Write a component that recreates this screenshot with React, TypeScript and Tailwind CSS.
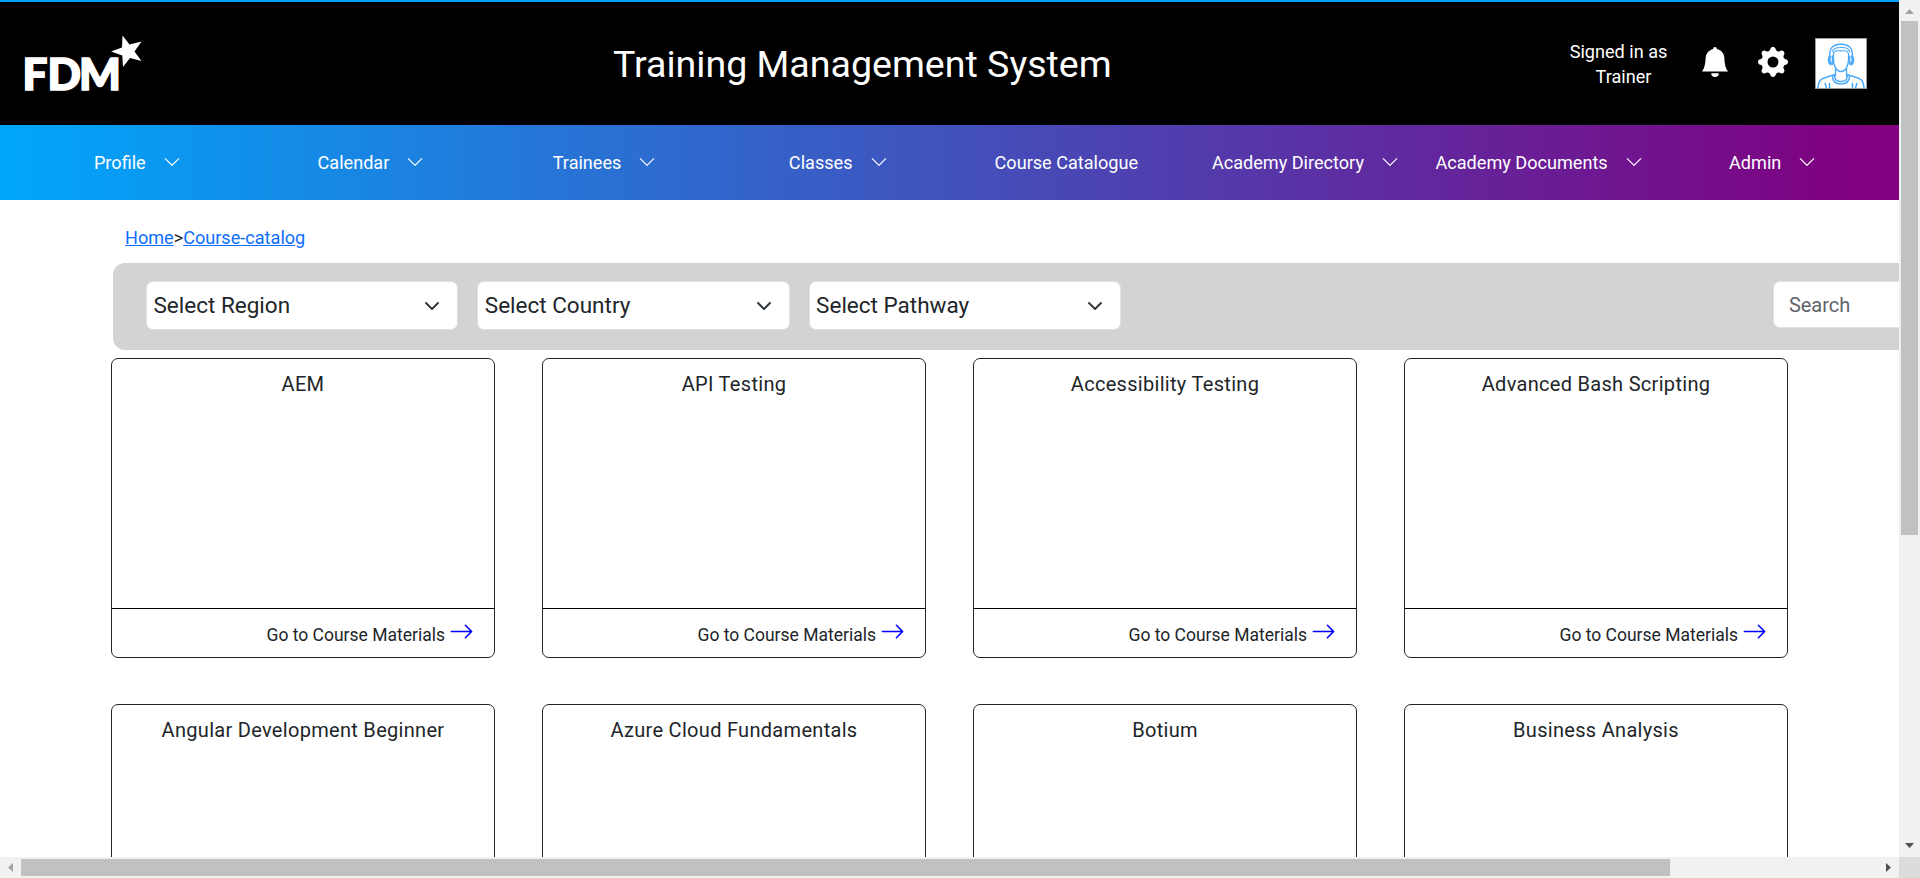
import { BsArrowRight, BsBellFill, BsChevronDown, BsGearFill } from "react-icons/bs";

const navItems = [
  { label: "Profile", menu: true },
  { label: "Calendar", menu: true },
  { label: "Trainees", menu: true },
  { label: "Classes", menu: true },
  { label: "Course Catalogue", menu: false },
  { label: "Academy Directory", menu: true },
  { label: "Academy Documents", menu: true },
  { label: "Admin", menu: true },
];

const filters = ["Select Region", "Select Country", "Select Pathway"];

const courses = [
  "AEM",
  "API Testing",
  "Accessibility Testing",
  "Advanced Bash Scripting",
  "Angular Development Beginner",
  "Azure Cloud Fundamentals",
  "Botium",
  "Business Analysis",
];

function Logo() {
  return (
    <svg width="140" height="80" viewBox="15 27 140 80" className="shrink-0">
      <text
        y="90.2"
        x="22.6 47.6 79"
        fill="#fff"
        stroke="#fff"
        strokeWidth="1.7"
        fontFamily="Lato, sans-serif"
        fontWeight="900"
        fontSize="44"
      >
        FDM
      </text>
      <path fill="#fff" d="M122.500 35.500 L129.500 44.500 L141.500 41.500 L134.500 51.500 L141.500 61 L130 58 L123 67 L122.300 55.500 L111 51.500 L122 47.500 Z" />
    </svg>
  );
}

function Avatar() {
  return (
    <svg width="52" height="51" viewBox="0 0 52 51" fill="none" stroke="#4aa8f8" className="shrink-0">
      <rect x="0.5" y="0.5" width="51" height="50" fill="#fff" stroke="#9a9a9a" />
      <path strokeWidth="1.4" d="M15 20C13.500 10 18 6.200 26 6.200S38.500 10 37 20" />
      <path strokeWidth="1.2" d="M18.500 20V15.500C20 12 22 12.800 26 12.800S32 12 33.500 15.500V20" />
      <path strokeWidth="1.2" d="M17 14C19 9.500 22 9.500 26 9.500S33 9.500 35 14" />
      <path strokeWidth="1.4" d="M18.300 18C18 27 21 33.500 26 33.500S34 27 33.700 18" />
      <path strokeWidth="2.800" d="M15.500 18C13.200 20 13.500 24.500 16.500 26.500M36.500 18C38.800 20 38.500 24.500 35.500 26.500" />
      <path strokeWidth="1.300" d="M17.300 17.500V27M34.700 17.500V27M20.500 30.500V38M31.500 30.500V38" />
      <path strokeWidth="1.500" d="M3 50C3.500 42 6.500 40.500 12 39L20 36.500C19 42 22 43.500 26 43.500S33 42 32 36.500L40 39C45.500 40.500 48.500 42 49 50" />
      <path strokeWidth="1.4" d="M17.500 38C17.500 44 21 46 26 46S34.500 44 34.500 38" />
      <path strokeWidth="1.5" d="M10 45L11.500 50M14.500 45V50M42 45L40.500 50M37.500 45V50" />
    </svg>
  );
}

function Header() {
  return (
    <header className="flex h-[125px] shrink-0 border-t-2 border-[#009fff] bg-black text-white">
      <div className="w-[613px] shrink-0 pt-[25px] pl-[15px]">
        <Logo />
      </div>
      <h1 className="w-[956px] shrink-0 pt-[34px] text-[37.55px] leading-[56px] whitespace-nowrap">
        Training Management System
      </h1>
      <div className="w-[99px] shrink-0 pt-[37px] text-center text-[18.1px] leading-[25px] whitespace-nowrap">
        <div>Signed in as</div>
        <div className="pl-[10px]">Trainer</div>
      </div>
      <div className="flex items-start pt-[45px] pl-[32px]">
        <BsBellFill size={30} />
        <BsGearFill size={30} className="ml-[28px]" />
        <div className="-mt-[9px] ml-[27px]">
          <Avatar />
        </div>
      </div>
    </header>
  );
}

function Nav() {
  return (
    <nav className="grid h-[75px] shrink-0 grid-cols-8 bg-[linear-gradient(to_right,#00a6fb,#800080_98%)] pr-[9.5px] pl-[20.5px] text-[18.1px] text-white">
      {navItems.map((item) => (
        <a key={item.label} className="flex items-center justify-center pb-px whitespace-nowrap">
          <span className="pt-[2px]">{item.label}</span>
          {item.menu ? <BsChevronDown size={18} className="ml-[17px]" /> : <span className="w-[11px]" />}
        </a>
      ))}
    </nav>
  );
}

function FilterBar() {
  return (
    <div className="ml-[113px] flex h-[87px] w-[2000px] shrink-0 items-start rounded-[12px] bg-[#d3d3d3] pt-[18px] pl-[33px]">
      <div className="flex gap-[19px]">
        {filters.map((label) => (
          <button
            key={label}
            className="flex h-[49px] w-[312.3px] items-center justify-between rounded-[7px] border border-[#dee2e6] bg-white pr-[17px] pl-[6.5px] text-[22.5px]"
          >
            {label}
            <svg width="16" height="16" viewBox="0 0 16 16" fill="none" stroke="#343a40" strokeWidth="2" strokeLinecap="round" strokeLinejoin="round">
              <path d="m2 5 6 6 6-6" />
            </svg>
          </button>
        ))}
      </div>
      <input
        placeholder="Search"
        className="ml-[652px] h-[47px] w-[280px] rounded-[7px] border border-[#dee2e6] bg-white px-[15px] text-[20px] placeholder:text-[#5f6469]"
      />
    </div>
  );
}

function CourseCard({ title }: { title: string }) {
  return (
    <article className="flex h-[300px] flex-col rounded-[7px] border border-[#212529]">
      <h2 className="flex-1 pt-[10px] text-center text-[20px] leading-[30px] tracking-[0.3px]">{title}</h2>
      <div className="flex h-[49px] justify-end border-t border-black pt-[13px] pr-[20px] text-[17.5px] leading-[27px]">
        <span>Go to Course Materials</span>
        <BsArrowRight size={25} color="#0000ff" className="-mt-[3px] ml-[4px]" />
      </div>
    </article>
  );
}

function VerticalScrollbar() {
  return (
    <div className="flex w-[21px] shrink-0 flex-col items-center bg-[#f1f1f1]">
      <svg width="21" height="21" className="shrink-0">
        <path fill="#a3a3a3" d="M10.500 9 15 14H6Z" />
      </svg>
      <div className="h-[514px] w-[17px] bg-[#c1c1c1]" />
      <svg width="21" height="21" className="mt-auto shrink-0">
        <path fill="#505050" d="M6 7H15L10.500 12Z" />
      </svg>
    </div>
  );
}

function HorizontalScrollbar() {
  return (
    <div className="flex h-[21px] shrink-0 items-center bg-[#f1f1f1]">
      <svg width="21" height="21" className="shrink-0">
        <path fill="#a3a3a3" d="M8 10.500 13 6V15Z" />
      </svg>
      <div className="h-[17px] w-[1649px] bg-[#c1c1c1]" />
      <svg width="21" height="21" className="ml-auto shrink-0">
        <path fill="#505050" d="M8 6V15L13 10.500Z" />
      </svg>
      <div className="h-[21px] w-[21px] shrink-0 bg-[#dcdcdc]" />
    </div>
  );
}

export default function App() {
  return (
    <div className="flex h-[878px] w-[1920px] flex-col overflow-hidden bg-white font-['Roboto',sans-serif] text-[#212529]">
      <div className="flex h-[857px] shrink-0">
        <div className="flex w-[1899px] shrink-0 flex-col overflow-hidden">
          <Header />
          <Nav />
          <div className="h-[63px] shrink-0 pt-[24px] pl-[125px] text-[18.1px] leading-[27px]">
            <a className="text-[#0d6efd] underline">Home</a>
            <span>&gt;</span>
            <a className="text-[#0d6efd] underline">Course-catalog</a>
          </div>
          <FilterBar />
          <main className="mt-[8px] ml-[111px] grid w-[1677px] shrink-0 grid-cols-4 gap-x-[47px] gap-y-[46px]">
            {courses.map((title) => (
              <CourseCard key={title} title={title} />
            ))}
          </main>
        </div>
        <VerticalScrollbar />
      </div>
      <HorizontalScrollbar />
    </div>
  );
}
